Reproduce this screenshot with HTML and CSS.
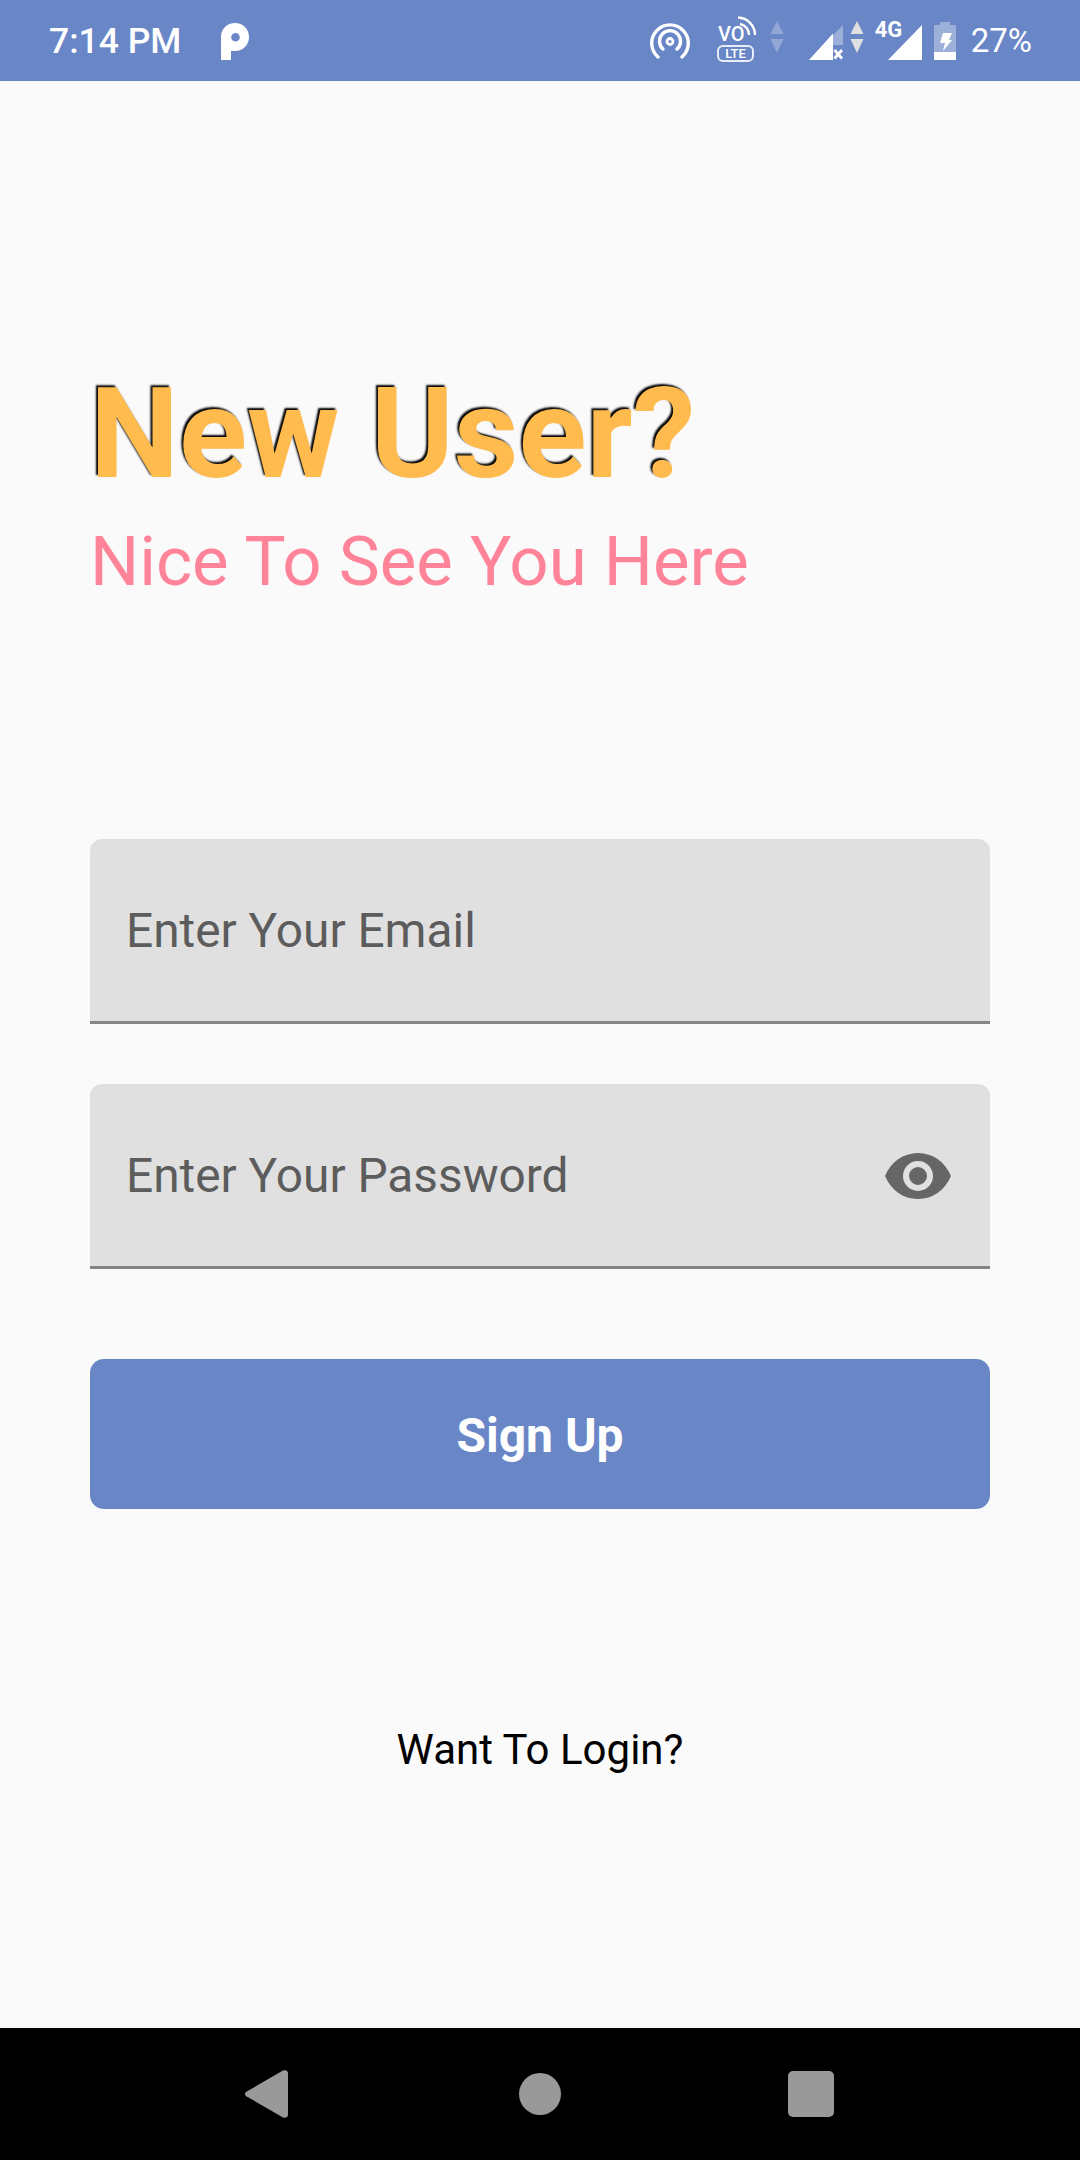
FILE: index.html
```html
<!DOCTYPE html>
<html lang="en">
<head>
<meta charset="utf-8">
<title>Sign Up</title>
<link rel="stylesheet" href="styles.css">
</head>
<body>
<div class="app">
  <header class="status">
    <div class="status-left">
      <span class="time">7:14 PM</span>
      <svg class="ic-p" width="28" height="37" viewBox="0 0 28 37"><path fill="#fff" fill-rule="evenodd" d="M0 37V14C0 6 6 0 14 0s14 6 14 14-6 14-14 14H10v9zM14.500 10a4.300 4.300 0 1 0 0 8.600 4.300 4.300 0 0 0 0-8.600z"/></svg>
    </div>
    <div class="status-right">
      <svg class="ic" width="40" height="36" viewBox="0 0 40 36"><g fill="none" stroke="#fff" stroke-width="3.400" stroke-linecap="round"><path d="M8 34A18.300 18.300 0 1 1 32 34"/><path d="M13 26A10.500 10.500 0 1 1 27 26"/></g><circle cx="20" cy="18.500" r="3" fill="none" stroke="#fff" stroke-width="2.800"/></svg>
      <svg class="ic ic-vo" width="39" height="46" viewBox="0 0 39 46"><text x="1" y="25" class="vo">VO</text><g fill="none" stroke="#fff" stroke-width="2.400"><path d="M23 8a11 11 0 0 1 9 11"/><path d="M21 1.500A17.500 17.500 0 0 1 38 19"/></g><rect x="1" y="30" width="35" height="15" rx="5" fill="none" stroke="#fff" stroke-width="2" opacity=".85"/><text x="18.500" y="42" text-anchor="middle" class="lte">LTE</text></svg>
      <svg class="ic ic-arrows" width="14" height="32" viewBox="0 0 14 32"><path d="M7 0l6.500 13H.5z" fill="#fff" opacity=".28"/><path d="M.5 18h13L7 32z" fill="#fff" opacity=".28"/></svg>
      <svg class="ic ic-sig1" width="34" height="35" viewBox="0 0 34 35"><path d="M34 0v20H24v15H0z" fill="#fff" opacity=".35"/><path d="M24 8.500V35H0z" fill="#fff"/><path d="M25.500 25l7.500 8.500M33 25l-7.500 8.500" stroke="#fff" stroke-width="2.800"/></svg>
      <svg class="ic ic-arrows2" width="14" height="32" viewBox="0 0 14 32"><path d="M7 0l6.500 13H.5z" fill="#e0e0e0"/><path d="M.5 18h13L7 32z" fill="#e0e0e0"/></svg>
      <span class="net"><span class="g4">4G</span><svg width="34" height="35" viewBox="0 0 34 35" class="ic-sig2"><path d="M34 0v35H0z" fill="#fff"/></svg></span>
      <svg class="ic ic-batt" width="22" height="38" viewBox="0 0 22 38"><path d="M6 0h10v3h5a1 1 0 0 1 1 1v33a1 1 0 0 1-1 1H1a1 1 0 0 1-1-1V4a1 1 0 0 1 1-1h5z" fill="#fff" opacity=".35"/><path d="M0 30h22v7a1 1 0 0 1-1 1H1a1 1 0 0 1-1-1z" fill="#fff"/><path d="M9 11h9l-3 7h3l-9 11 2-8H6z" fill="#fff"/></svg>
      <span class="pct">27%</span>
    </div>
  </header>

  <main class="content">
    <h1 class="title">New User?</h1>
    <p class="subtitle">Nice To See You Here</p>

    <div class="field field-email">
      <span class="placeholder">Enter Your Email</span>
    </div>
    <div class="field field-pass">
      <span class="placeholder">Enter Your Password</span>
      <svg class="eye" width="66" height="46" viewBox="0 0 66 46"><path fill-rule="evenodd" fill="#666" d="M33 0C18 0 6 9 0 23c6 14 18 23 33 23s27-9 33-23C60 9 48 0 33 0zm0 38a15 15 0 1 1 0-30 15 15 0 0 1 0 30zm0-24a9 9 0 1 0 0 18 9 9 0 0 0 0-18z"/></svg>
    </div>
    <button class="submit" type="button">Sign Up</button>
    <a class="login">Want To Login?</a>
  </main>

  <nav class="navbar">
    <svg class="back" width="43" height="48" viewBox="0 0 43 48"><path d="M38 .6 1.300 21.800c-1.700 1-1.700 3.400 0 4.400L38 47.400c2.300 1.200 5 0 5-2.600V3.200C43 .6 40.300-.6 38 .6z" fill="#999"/></svg>
    <span class="home"></span>
    <span class="recent"></span>
  </nav>
</div>
</body>
</html>
```

FILE: styles.css
```css
* { box-sizing: border-box; }
html, body { margin: 0; padding: 0; }
body { width: 1080px; height: 2160px; font-family: Roboto, "Liberation Sans", sans-serif; background: #fafafa; overflow: hidden; }
.app { width: 1080px; height: 2160px; display: flex; flex-direction: column; }

.status { height: 81px; flex: none; background: #6986c7; color: #fff; display: flex; align-items: center; justify-content: space-between; padding: 0 48px 0 49px; }
.status-left { display: flex; align-items: center; gap: 40px; }
.time { font-size: 35.500px; font-weight: 500; line-height: 42px; }
.ic-p { display: block; margin-bottom: -2px; }
.status-right { display: flex; align-items: center; }
.ic { display: block; flex: none; }
.ic-vo { margin-left: 27px; margin-bottom: 3px; }
.vo { font: 500 20px Roboto, sans-serif; fill: #fff; }
.lte { font: 500 13px Roboto, sans-serif; fill: #fff; }
.ic-arrows { margin-left: 14px; margin-bottom: 8px; }
.ic-sig1 { margin-left: 25px; margin-top: 3px; }
.ic-arrows2 { margin-left: 7px; margin-bottom: 8px; }
.net { display: block; margin-left: 11px; height: 38px; position: relative; width: 47px; flex: none; }
.g4 { position: absolute; left: 0; top: -4px; font-size: 22px; font-weight: 700; line-height: 24px; }
.ic-sig2 { position: absolute; right: 0; bottom: 0; }
.ic-batt { margin-left: 12px; }
.pct { font-size: 33px; font-weight: 400; line-height: 40px; margin-left: 15px; }

.content { flex: 1; display: flex; flex-direction: column; padding: 0 90px; }
.title { margin: 279px 0 0; font-size: 126px; line-height: 148px; font-weight: 700; color: #ffbb4d; text-shadow: -2px -2px 2px #000; }
.subtitle { margin: 13px 0 0; font-size: 69px; line-height: 81px; color: #ff8499; }

.field { height: 185px; background: #e0e0e0; border-bottom: 3px solid #858585; border-radius: 12px 12px 0 0; display: flex; align-items: center; justify-content: space-between; padding: 2px 39px 0 36px; }
.field-email { margin-top: 237px; }
.field-pass { margin-top: 60px; }
.placeholder { font-size: 47.800px; line-height: 56px; color: #5c5c5c; }
.eye { display: block; flex: none; }

.submit { margin-top: 90px; height: 150px; border: 0; border-radius: 14px; background: #6986c7; color: #fff; font: 700 48px/56px Roboto, sans-serif; padding: 4px 0 0; }
.login { margin-top: 216px; font-size: 42px; line-height: 49px; color: #000; text-align: center; }

.navbar { height: 132px; flex: none; background: #000; display: flex; align-items: center; padding-left: 245px; }
.back { display: block; flex: none; }
.home { margin-left: 231px; width: 42px; height: 42px; border-radius: 50%; background: #999; flex: none; }
.recent { margin-left: 227px; width: 46px; height: 46px; border-radius: 5px; background: #999; flex: none; }
```
